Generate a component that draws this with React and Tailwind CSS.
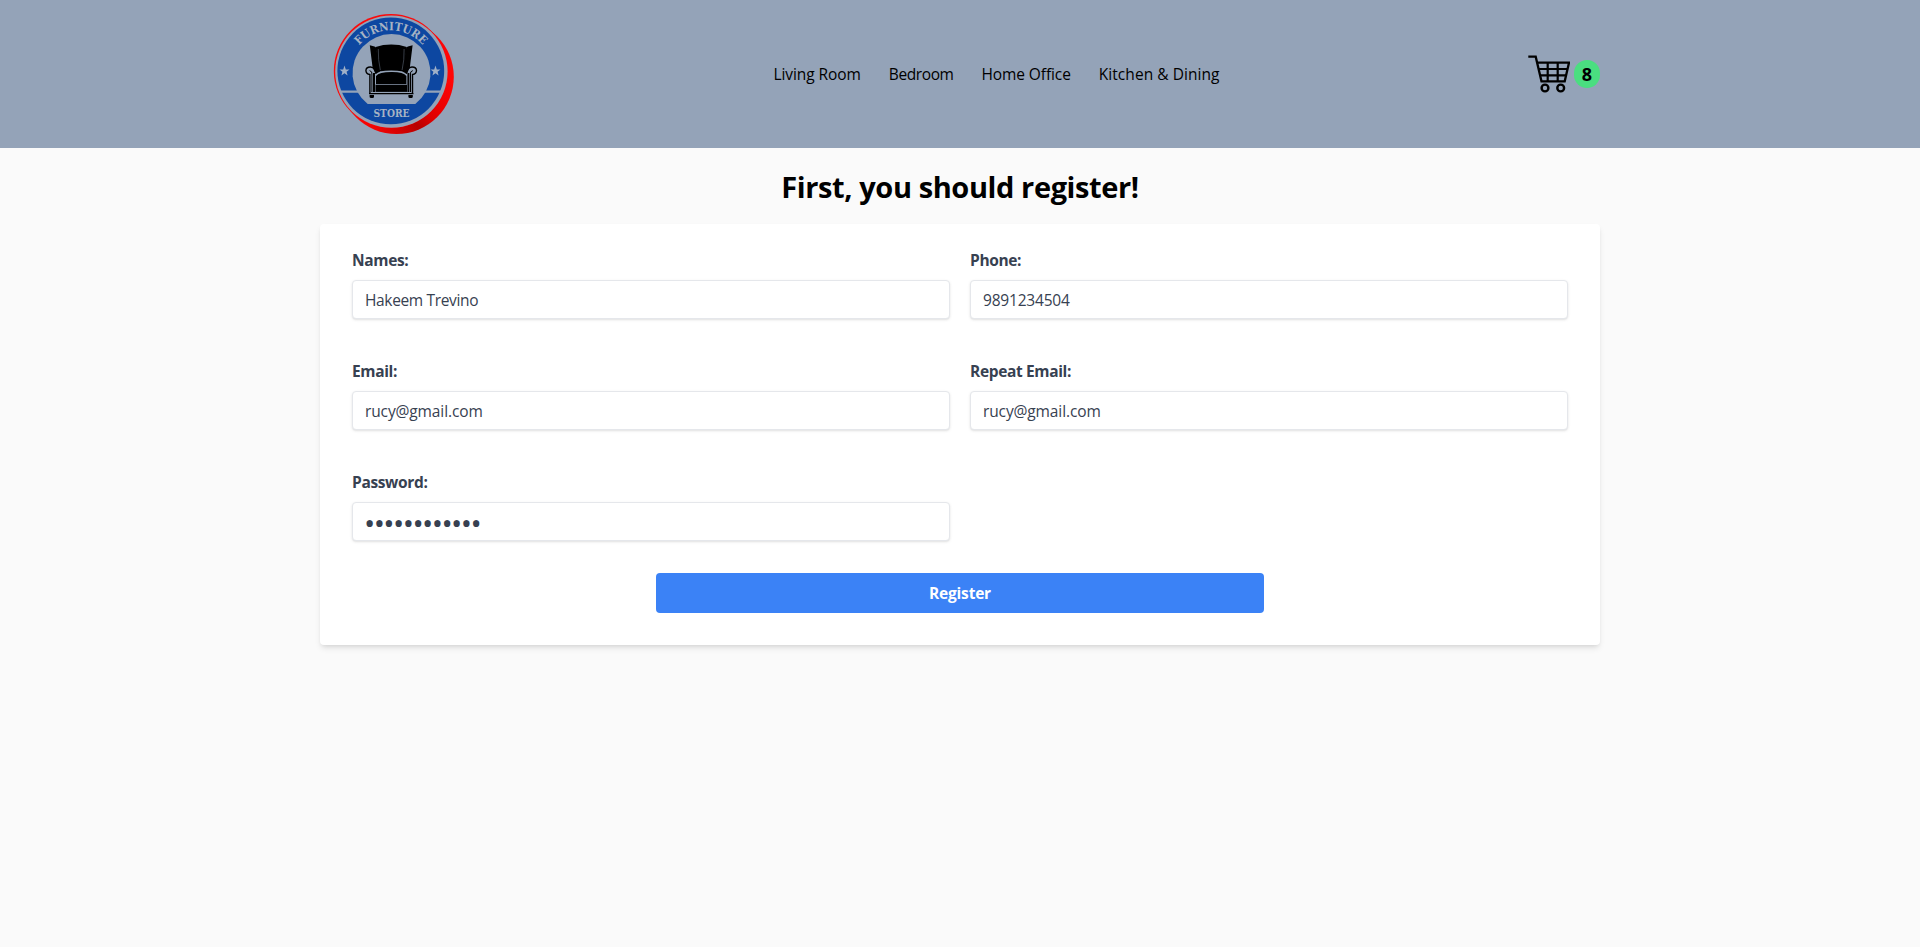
const links = [
  { label: "Living Room", cls: "tracking-[-0.08px]" },
  { label: "Bedroom", cls: "tracking-[-0.4px]" },
  { label: "Home Office", cls: "tracking-[-0.1px]" },
  { label: "Kitchen & Dining", cls: "tracking-[0.05px]" },
];

const fields = [
  { label: "Names:", type: "text", value: "Hakeem Trevino", cls: "text-[15.5px] tracking-[-0.35px]" },
  { label: "Phone:", type: "text", value: "9891234504", cls: "text-[15.5px] tracking-[-0.2px]" },
  { label: "Email:", type: "text", value: "rucy@gmail.com", cls: "text-[15.5px] tracking-[-0.12px]" },
  { label: "Repeat Email:", type: "text", value: "rucy@gmail.com", cls: "text-[15.5px] tracking-[-0.12px]" },
  { label: "Password:", type: "password", value: "Pa$$w0rd!123", cls: "pt-px text-[30px] tracking-[-1.6px] -indent-px" },
];

function Star({ x, y }) {
  return (
    <path
      transform={`translate(${x} ${y})`}
      d="M0-5.4 1.3-1.6 5-1.6 2.1.7 3.1 4.4 0 2.2-3.1 4.4-2.1.7-5-1.6-1.3-1.6Z"
      fill="#9fb0c8"
    />
  );
}

function Logo() {
  return (
    <svg width="148" height="148" viewBox="0 0 148 148" className="block shrink-0">
      <defs>
        <linearGradient id="rim" x1="0.1" y1="1" x2="1" y2="0.2">
          <stop offset="0.1" stopColor="#ff0505" />
          <stop offset="0.4" stopColor="#b80000" />
          <stop offset="0.52" stopColor="#e00000" />
          <stop offset="0.8" stopColor="#ff0505" />
        </linearGradient>
        <path id="arc" d="M29.700 71.500A41.200 41.200 0 0 1 112.100 71.500" />
      </defs>
      <circle cx="76.5" cy="76.7" r="57.3" fill="url(#rim)" />
      <circle cx="70.8" cy="71" r="57" fill="#fb0a0a" />
      <circle cx="71.4" cy="71.6" r="56.2" fill="#94a3b8" />
      <circle cx="70.8" cy="70.9" r="53.4" fill="#0d47a1" />
      <path d="M20.500 90.600H123V92.800H20.500Z" fill="#94a3b8" />
      <path d="M47.700 104A39 39 0 1 1 95.300 104Z" fill="#94a3b8" />
      <text
        fill="#a6b3c4"
        fontFamily="'DejaVu Serif Condensed', 'DejaVu Serif', serif"
        fontWeight="700"
        fontSize="11.500"
        textAnchor="middle"
      >
        <textPath href="#arc" startOffset="50%">FURNITURE</textPath>
      </text>
      <text
        x="71.500"
        y="117"
        fill="#a6b3c4"
        fontFamily="'DejaVu Serif Condensed', 'DejaVu Serif', serif"
        fontWeight="700"
        fontSize="11.500"
        textAnchor="middle"
        textLength="36"
        lengthAdjust="spacingAndGlyphs"
      >
        STORE
      </text>
      <Star x={24.500} y={71} />
      <Star x={115.500} y={71} />
      <g fill="#000">
        <path d="M49.800 45.200 54.500 46.600Q56 47 56.300 48.500L60 71.500 55.500 74 52.500 67Z" />
        <path d="M92.600 45.200 87.900 46.600Q86.400 47 86.100 48.500L82.400 71.500 86.900 74 89.900 67Z" />
        <path d="M55.600 47Q63 44.600 71.200 44.600T86.800 47L83.500 71.400Q77 70.500 71.200 70.500T58.900 71.400Z" />
        <path d="M56 76Q59 72.200 71.200 72T86.400 76V83.900H56Z" />
        <path d="M55.500 84.700H87V91.900H55.500Z" />
        <path d="M49 92.900H93.500V94.200H49Z" />
        <path d="M49.600 95H54V97.200L53 98H50.600L49.600 97.200Z" />
        <path d="M88.400 95H92.800V97.200L91.800 98H89.400L88.400 97.200Z" />
      </g>
      <path d="M58.300 49Q58 60 60.300 70M84.100 49Q84.400 60 82.100 70" fill="none" stroke="#5c6675" strokeWidth=".6" />
      <g fill="none" stroke="#000" strokeWidth="1.400">
        <path d="M49.900 93V74.500Q46 74 45.900 70.500 46.200 66.900 50.500 67 55.500 67.500 56 73.500" />
        <path d="M92.500 93V74.500Q96.400 74 96.500 70.500 96.200 66.900 91.900 67 86.900 67.500 86.400 73.500" />
        <path d="M51.900 92V74Q52.500 71.500 49.600 70.600M90.500 92V74Q89.900 71.500 92.800 70.600" strokeWidth="1" />
        <path d="M54 92V73M88.400 92V73" strokeWidth="2" />
      </g>
    </svg>
  );
}

function Cart() {
  return (
    <svg width="44" height="40" viewBox="0 0 44 40" fill="none" stroke="#000" className="block shrink-0">
      <path d="M2.300 2.700H9.700L15.500 27.300H38.700L43 8.700H11.300" strokeWidth="2.300" />
      <path d="M12.600 15H41.500M14 21.300H40M21.700 8.700V27.300M31.700 8.700V27.300" strokeWidth="2.200" />
      <circle cx="19" cy="34" r="3.400" strokeWidth="2.400" />
      <circle cx="34.700" cy="34" r="3.400" strokeWidth="2.400" />
    </svg>
  );
}

export default function App() {
  return (
    <div className="min-h-screen bg-[#fafafa] font-['Open_Sans',sans-serif] text-black">
      <header className="h-[148px] bg-[#94a3b8]">
        <div className="mx-auto flex h-full w-[1280px] items-center justify-between">
          <Logo />
          <nav className="flex gap-7 pt-0.5 pr-px text-[15.5px]">
            {links.map((l) => (
              <a key={l.label} href="#" className={l.cls}>{l.label}</a>
            ))}
          </nav>
          <div className="flex items-center gap-1">
            <Cart />
            <span className="flex h-7 w-[26px] items-center justify-center rounded-full bg-[#4ade80] text-lg font-bold">8</span>
          </div>
        </div>
      </header>
      <main className="mx-auto w-[1280px]">
        <h1 className="pt-[21px] pb-[19px] text-center text-[29px] leading-9 font-bold tracking-[-0.4px]">First, you should register!</h1>
        <form className="rounded bg-white px-8 pt-6 pb-8 shadow-md">
          <div className="grid grid-cols-2 gap-x-5 gap-y-10 text-[#374151]">
            {fields.map((f) => (
              <label key={f.label} className="block">
                <span className="mb-2 block text-[15.5px] leading-6 font-bold tracking-[-0.35px]">{f.label}</span>
                <input
                  type={f.type}
                  defaultValue={f.value}
                  className={`block h-[39px] w-full rounded border border-[#e5e7eb] bg-white px-3 shadow-sm outline-none ${f.cls}`}
                />
              </label>
            ))}
          </div>
          <button type="button" className="mx-auto mt-8 block h-10 w-1/2 rounded bg-[#3b82f6] pt-0.5 text-[15.5px] font-bold tracking-[-0.2px] text-white">
            Register
          </button>
        </form>
      </main>
    </div>
  );
}
